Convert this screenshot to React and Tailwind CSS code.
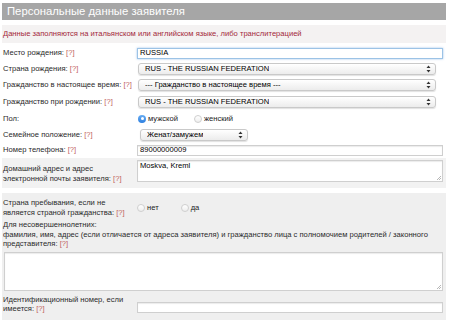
import React from "react";

const Help = () => <span className="text-[#c0605c]">[?]</span>;

const Arrows = () => (
	<svg width="5" height="8" viewBox="0 0 5 8" className="shrink-0">
		<path d="M2.5 0.5 L4.5 3 L0.5 3 Z" fill="#333" />
		<path d="M2.5 7.5 L4.5 5 L0.5 5 Z" fill="#333" />
	</svg>
);

const Select = ({ value, className = "" }) => (
	<div
		className={`flex items-center justify-between h-[12px] rounded-[3px] border border-[#c9c9c9] bg-gradient-to-b from-white to-[#ececec] shadow-[0_1px_1px_rgba(0,0,0,0.12)] pl-[6px] pr-[4px] text-black ${className}`}
	>
		<span className="truncate">{value}</span>
		<Arrows />
	</div>
);

const Input = ({ value = "", focused = false, className = "" }) => (
	<div
		className={`h-[11px] border bg-white flex items-center pl-[2px] text-black leading-none ${
			focused
				? "border-[#9cc3e6] shadow-[0_0_2px_rgba(90,150,220,0.6)]"
				: "border-[#cfcfcf] shadow-[inset_0_1px_1px_rgba(0,0,0,0.08)]"
		} ${className}`}
	>
		{value}
	</div>
);

const Radio = ({ checked, label, className = "" }) => (
	<div className={`flex items-center gap-[2px] ${className}`}>
		{checked ? (
			<span className="w-[8px] h-[8px] rounded-full bg-gradient-to-b from-[#69adf2] to-[#2b7fe0] flex items-center justify-center">
				<span className="w-[3px] h-[3px] rounded-full bg-white" />
			</span>
		) : (
			<span className="w-[8px] h-[8px] rounded-full border border-[#cfcfcf] bg-gradient-to-b from-white to-[#eee]" />
		)}
		<span className="text-[#222]">{label}</span>
	</div>
);

const Row = ({ label, help = true, children, h = "h-[16px]" }) => (
	<div className={`flex items-center ${h}`}>
		<div className="w-[135px] shrink-0 pl-[1px] whitespace-nowrap">
			{label} {help && <Help />}
		</div>
		<div className="flex-1 pr-[3px] flex items-center">{children}</div>
	</div>
);

const Resize = () => (
	<svg width="5" height="5" viewBox="0 0 5 5" className="absolute right-[1px] bottom-[1px]">
		<path d="M1 5 L5 1 M3 5 L5 3" stroke="#999" strokeWidth="0.7" />
	</svg>
);

export default function App() {
	return (
		<div className="w-[449px] h-[320px] overflow-hidden bg-white font-['Liberation_Sans',Arial,sans-serif] text-[7.6px] leading-[9.5px] text-[#2a2a2a] pl-[2px] pr-[3px] pt-[3px]">
			<div className="h-[17px] bg-[#a6a6a6] text-white text-[11.3px] pl-[5px] flex items-center">
				Персональные данные заявителя
			</div>
			<div className="mt-[5px] h-[18px] bg-[#f4f2f2] text-[#a3283a] pl-[1px] flex items-center">
				Данные заполняются на итальянском или английском языке, либо транслитерацией
			</div>

			<div className="mt-[2px]">
				<Row label="Место рождения:">
					<Input value="RUSSIA" focused className="w-full" />
				</Row>
				<Row label="Страна рождения:">
					<Select value="RUS - THE RUSSIAN FEDERATION" className="ml-[1px] w-[298px]" />
				</Row>
				<Row label="Гражданство в настоящее время:">
					<Select value="--- Гражданство в настоящее время ---" className="ml-[1px] w-[298px]" />
				</Row>
				<Row label="Гражданство при рождении:" h="h-[17px]">
					<Select value="RUS - THE RUSSIAN FEDERATION" className="ml-[1px] w-[298px]" />
				</Row>
				<Row label="Пол:" help={false} h="h-[17px]">
					<Radio checked label="мужской" className="ml-[1px]" />
					<Radio label="женский" className="ml-[16px]" />
				</Row>
				<Row label="Семейное положение:" h="h-[15px]">
					<Select value="Женат/замужем" className="ml-[3px] w-[108px]" />
				</Row>
				<Row label="Номер телефона:">
					<Input value="89000000009" className="w-full" />
				</Row>
			</div>

			<div className="flex h-[30px] bg-[#f2f2f2] pt-[2px]">
				<div className="w-[135px] shrink-0 pl-[1px] pt-[4px]">
					Домашний адрес и адрес
					<br />
					электронной почты заявителя: <Help />
				</div>
				<div className="flex-1 pr-[3px]">
					<div className="relative h-[22px] border border-[#cfcfcf] bg-white pl-[2px] text-black shadow-[inset_0_1px_1px_rgba(0,0,0,0.08)]">
						Moskva, Kreml
						<Resize />
					</div>
				</div>
			</div>

			<div className="mt-[5px] bg-[#efefef] pl-[1px] pr-[3px] pt-[5px] pb-[10px]">
				<div className="flex items-center">
					<div className="w-[134px] shrink-0">
						Страна пребывания, если не
						<br />
						является страной гражданства: <Help />
					</div>
					<Radio label="нет" />
					<Radio label="да" className="ml-[22px]" />
				</div>

				<div className="mt-[3px] whitespace-nowrap">
					Для несовершеннолетних:
					<br />
					фамилия, имя, адрес (если отличается от адреса заявителя) и гражданство лица с полномочием родителей / законного
					<br />
					представителя: <Help />
				</div>

				<div className="relative mt-[3px] ml-[1px] h-[39px] border border-[#cfcfcf] bg-white shadow-[inset_0_1px_1px_rgba(0,0,0,0.08)]">
					<Resize />
				</div>

				<div className="flex items-center mt-[4px]">
					<div className="w-[134px] shrink-0">
						Идентификационный номер, если
						<br />
						имеется: <Help />
					</div>
					<Input className="flex-1 mt-[6px]" />
				</div>
			</div>
		</div>
	);
}
